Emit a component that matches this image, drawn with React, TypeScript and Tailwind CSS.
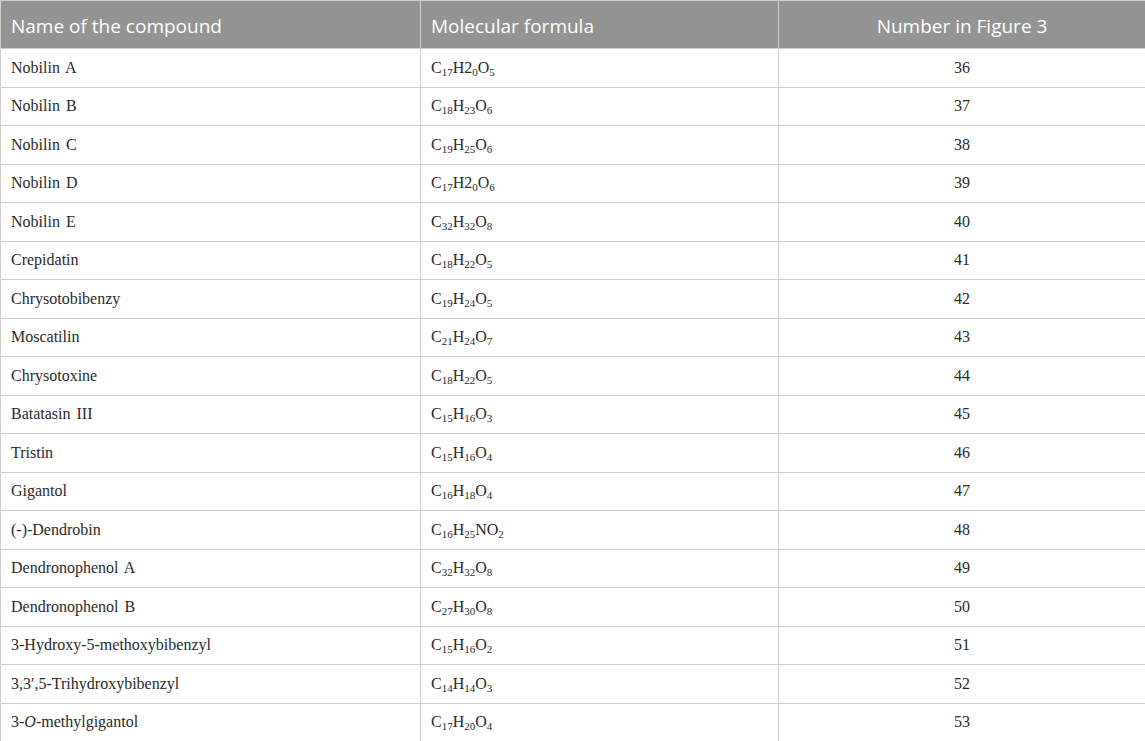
import React from 'react';

type Part = [string, string?];

// formula parts: [main text, subscript]
const rows: { name: React.ReactNode; formula: Part[]; num: number }[] = [
  { name: 'Nobilin A', formula: [['C', '17'], ['H2', '0'], ['O', '5']], num: 36 },
  { name: 'Nobilin B', formula: [['C', '18'], ['H', '23'], ['O', '6']], num: 37 },
  { name: 'Nobilin C', formula: [['C', '19'], ['H', '25'], ['O', '6']], num: 38 },
  { name: 'Nobilin D', formula: [['C', '17'], ['H2', '0'], ['O', '6']], num: 39 },
  { name: 'Nobilin E', formula: [['C', '32'], ['H', '32'], ['O', '8']], num: 40 },
  { name: 'Crepidatin', formula: [['C', '18'], ['H', '22'], ['O', '5']], num: 41 },
  { name: 'Chrysotobibenzy', formula: [['C', '19'], ['H', '24'], ['O', '5']], num: 42 },
  { name: 'Moscatilin', formula: [['C', '21'], ['H', '24'], ['O', '7']], num: 43 },
  { name: 'Chrysotoxine', formula: [['C', '18'], ['H', '22'], ['O', '5']], num: 44 },
  { name: 'Batatasin III', formula: [['C', '15'], ['H', '16'], ['O', '3']], num: 45 },
  { name: 'Tristin', formula: [['C', '15'], ['H', '16'], ['O', '4']], num: 46 },
  { name: 'Gigantol', formula: [['C', '16'], ['H', '18'], ['O', '4']], num: 47 },
  { name: '(-)-Dendrobin', formula: [['C', '16'], ['H', '25'], ['NO', '2']], num: 48 },
  { name: 'Dendronophenol A', formula: [['C', '32'], ['H', '32'], ['O', '8']], num: 49 },
  { name: 'Dendronophenol B', formula: [['C', '27'], ['H', '30'], ['O', '8']], num: 50 },
  { name: '3-Hydroxy-5-methoxybibenzyl', formula: [['C', '15'], ['H', '16'], ['O', '2']], num: 51 },
  { name: '3,3\u2032,5-Trihydroxybibenzyl', formula: [['C', '14'], ['H', '14'], ['O', '3']], num: 52 },
  { name: <>3-<i>O</i>-methylgigantol</>, formula: [['C', '17'], ['H', '20'], ['O', '4']], num: 53 },
];

function Formula({ parts }: { parts: Part[] }) {
  return (
    <span>
      {parts.map(([main, sub], i) => (
        <React.Fragment key={i}>
          {main}
          {sub && <sub className="text-[11px] relative top-[0px] align-[-3px] leading-none">{sub}</sub>}
        </React.Fragment>
      ))}
    </span>
  );
}

export default function App() {
  return (
    <div className="w-[1145px] h-[741px] bg-white overflow-hidden">
      <table className="table-fixed border-collapse w-[1145px]">
        <colgroup>
          <col className="w-[420px]" />
          <col className="w-[358px]" />
          <col className="w-[367px]" />
        </colgroup>
        <thead>
          <tr className="h-[48px] bg-[#939393] text-white text-[19px] font-['Open_Sans',sans-serif]">
            <th className="border border-[#cfcfcf] text-left font-normal pl-[10px] pt-[3px]">Name of the compound</th>
            <th className="border border-[#cfcfcf] text-left font-normal pl-[10px] pt-[3px]">Molecular formula</th>
            <th className="border border-[#cfcfcf] text-center font-normal pt-[3px]">Number in Figure 3</th>
          </tr>
        </thead>
        <tbody className="text-[16px] text-[#2a2a2a] font-['Liberation_Serif',serif]">
          {rows.map((r, i) => (
            <tr key={i} className="h-[38.5px]">
              <td className="border border-[#cfcfcf] pl-[10px] [word-spacing:2px]">{r.name}</td>
              <td className="border border-[#cfcfcf] pl-[10px]"><Formula parts={r.formula} /></td>
              <td className="border border-[#cfcfcf] text-center">{r.num}</td>
            </tr>
          ))}
        </tbody>
      </table>
    </div>
  );
}
